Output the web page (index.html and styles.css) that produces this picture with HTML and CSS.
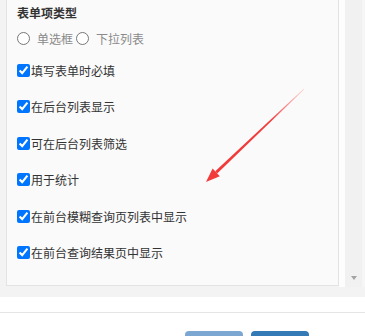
FILE: index.html
```html
<!DOCTYPE html>
<html lang="zh-CN">
<head>
<meta charset="utf-8">
<title>表单项设置</title>
<link rel="stylesheet" href="styles.css">
</head>
<body>
<div class="dialog">
  <div class="dialog-body">
    <div class="scroller">
      <div class="viewport">
        <div class="panel">
          <div class="title">表单项类型</div>
          <div class="radio-row">
            <label class="radio"><input type="radio" name="kind"><span>单选框</span></label>
            <label class="radio"><input type="radio" name="kind"><span>下拉列表</span></label>
          </div>
          <label class="check"><input type="checkbox" checked><span>填写表单时必填</span></label>
          <label class="check"><input type="checkbox" checked><span>在后台列表显示</span></label>
          <label class="check"><input type="checkbox" checked><span>可在后台列表筛选</span></label>
          <label class="check"><input type="checkbox" checked><span>用于统计</span></label>
          <label class="check"><input type="checkbox" checked><span>在前台模糊查询页列表中显示</span></label>
          <label class="check"><input type="checkbox" checked><span>在前台查询结果页中显示</span></label>
        </div>
      </div>
      <div class="gutter"></div>
      <div class="scrollbar">
        <div class="sb-track"></div>
        <div class="sb-down"><span class="sb-arrow"></span></div>
      </div>
      <div class="edge"></div>
    </div>
  </div>
  <div class="footer">
    <button class="btn btn-light" type="button" aria-label="取消"></button>
    <button class="btn btn-primary" type="button" aria-label="确定"></button>
  </div>
  <svg class="annotation" width="365" height="336" viewBox="0 0 365 336">
    <defs>
      <linearGradient id="fade" gradientUnits="userSpaceOnUse" x1="304" y1="89" x2="270" y2="121">
        <stop offset="0" stop-color="#ff5a5a" stop-opacity="0.25"/>
        <stop offset="1" stop-color="#f23a3a" stop-opacity="1"/>
      </linearGradient>
    </defs>
    <polygon points="304.3,89.3 303.7,88.7 215.2,171.3 217.2,173.5" fill="url(#fade)"/>
    <polygon points="206,182 212.6,168.6 219.8,176.2" fill="#f23a3a"/>
  </svg>
</div>
</body>
</html>
```

FILE: styles.css
```css
* { box-sizing: border-box; }

html, body {
  margin: 0;
  padding: 0;
  background: #ffffff;
}

body {
  font-family: "Noto Sans CJK SC", "Noto Sans", sans-serif;
  font-size: 12px;
  color: #333333;
}

.dialog {
  position: relative;
  width: 365px;
  height: 336px;
  overflow: hidden;
}

.dialog-body {
  background: #f3f3f3;
  height: 297px;
  padding-bottom: 10px;
}

.scroller {
  display: flex;
  height: 287px;
}

.viewport {
  width: 339px;
  height: 287px;
  padding-left: 6px;
  overflow: hidden;
  background: #f3f3f3;
}

.panel {
  background: #fafafa;
  border: 1px solid #e3e3e3;
  border-top: none;
  height: 286px;
  padding: 0 0 0 10px;
  display: flex;
  flex-direction: column;
}

.title {
  font-weight: bold;
  line-height: 25px;
  height: 25px;
}

.radio-row {
  display: flex;
  align-items: center;
  height: 27px;
  color: #8a8a8a;
}

.radio {
  display: inline-flex;
  align-items: center;
  margin-right: 3px;
}

.radio input {
  margin: 0 7px 0 0;
  width: 13px;
  height: 13px;
}

.check {
  display: flex;
  align-items: center;
  height: 36.5px;
}

.check input {
  margin: 0 1px 0 0;
  width: 13px;
  height: 13px;
}

.gutter {
  width: 6px;
  background: #fdfdfd;
}

.scrollbar {
  width: 17px;
  display: flex;
  flex-direction: column;
  background: #f1f1f1;
}

.sb-track {
  flex: 1;
}

.sb-down {
  height: 17px;
  display: flex;
  align-items: center;
  justify-content: center;
  padding-bottom: 1px;
}

.sb-arrow {
  width: 0;
  height: 0;
  border-left: 3.5px solid transparent;
  border-right: 3.5px solid transparent;
  border-top: 4px solid #a3a3a3;
}

.edge {
  flex: 1;
  background: #f6f6f6;
}

.footer {
  margin-top: 15px;
  border-top: 1px solid #e5e5e5;
  padding: 18px 56px 0 0;
  display: flex;
  justify-content: flex-end;
  gap: 8px;
}

.btn {
  width: 58px;
  height: 32px;
  border: none;
  border-radius: 4px;
  padding: 0;
}

.btn-light {
  background: #7ba7d2;
}

.btn-primary {
  background: #337ab7;
}

.annotation {
  position: absolute;
  left: 0;
  top: 0;
  pointer-events: none;
}
```
